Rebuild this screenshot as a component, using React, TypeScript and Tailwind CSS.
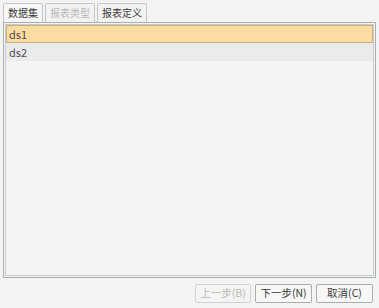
import React from 'react';

const font = { fontFamily: '"Noto Sans CJK SC", "Liberation Sans", sans-serif' };

function Tab({ label, active, disabled }: { label: string; active?: boolean; disabled?: boolean }) {
  return (
    <div
      className={
        'h-[19px] px-[4px] flex items-center border border-b-0 border-[#c4c7c9] rounded-t-[2px] text-[10px] leading-none ' +
        (active ? 'bg-[#f7f7f6] ' : 'bg-[#f2f2f1] ') +
        (disabled ? 'text-[#b8b8b8]' : 'text-[#3a3a3a]')
      }
    >
      {label}
    </div>
  );
}

function Btn({ label, disabled }: { label: string; disabled?: boolean }) {
  return (
    <div
      className={
        'h-[19px] flex items-center justify-center border rounded-[2px] text-[10.5px] leading-none ' +
        (disabled
          ? 'border-[#d0d3d5] text-[#b8b8b8] bg-[#f4f4f3] w-[56px]'
          : 'border-[#a9acae] text-[#3a3a3a] bg-[#f7f7f6] w-[57px]')
      }
    >
      {label}
    </div>
  );
}

export default function App() {
  return (
    <div className="w-[379px] h-[308px] bg-[#f3f3f2] flex flex-col" style={font}>
      <div className="mx-[3px] mt-[2px] flex-1 flex flex-col">
        <div className="flex gap-[2px] h-[20px] items-end">
          <Tab label="数据集" active />
          <Tab label="报表类型" disabled />
          <Tab label="报表定义" />
        </div>
        <div className="flex-1 border border-[#a7b0b5] p-[1px] bg-[#f4f4f3]">
          <div className="h-full border border-[#c8cbcc] bg-[#f4f4f3]">
            <div className="h-[18px] flex items-center px-[2px] bg-[#fddca2] border border-[#c9ae83] text-[11px] text-[#4a4a4a]">
              ds1
            </div>
            <div className="h-[18px] flex items-center px-[3px] bg-[#ebebeb] text-[11px] text-[#4a4a4a]">
              ds2
            </div>
          </div>
        </div>
      </div>
      <div className="h-[30px] flex items-center justify-end gap-[4px] pr-[6px]">
        <Btn label="上一步(B)" disabled />
        <Btn label="下一步(N)" />
        <Btn label="取消(C)" />
      </div>
    </div>
  );
}
